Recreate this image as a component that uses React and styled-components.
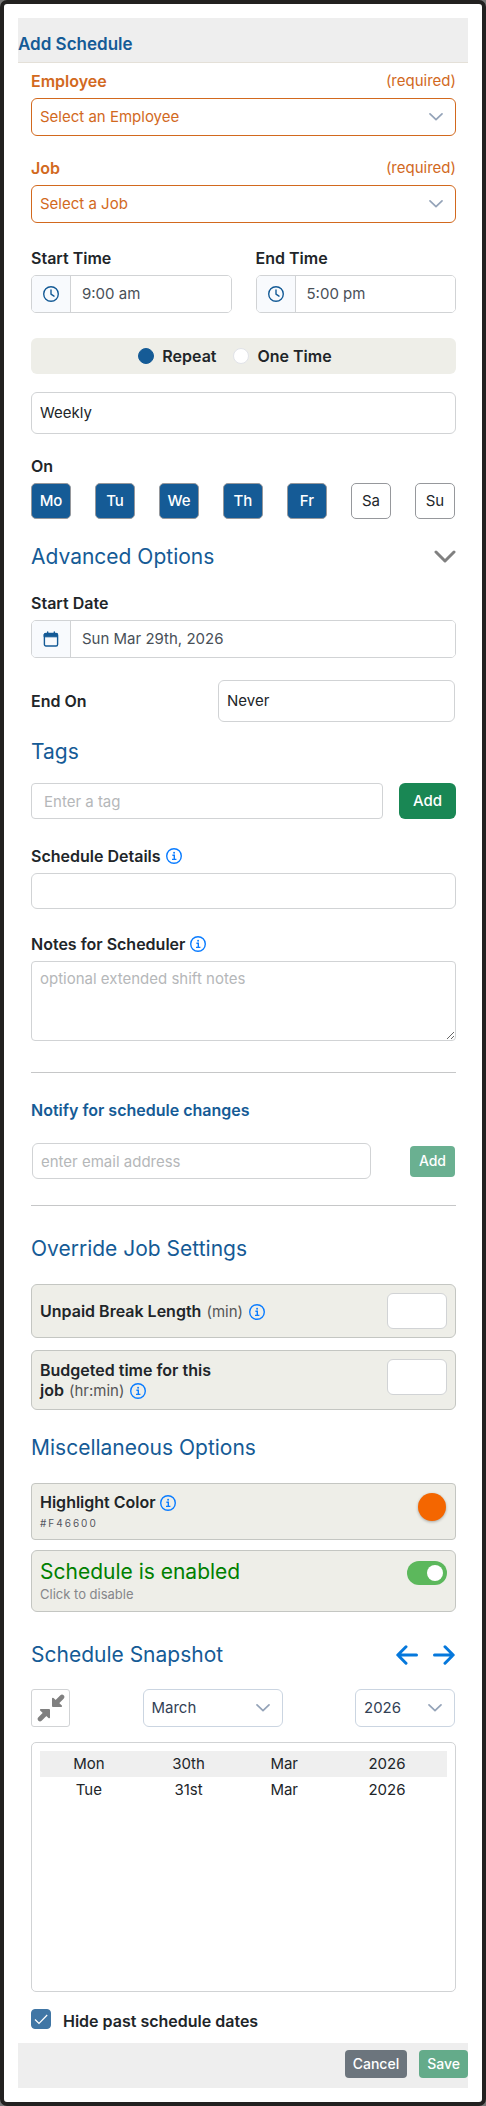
import React, { useId } from "react";
import styled, { createGlobalStyle, css } from "styled-components";

const c = {
  blue: "#155b96",
  link: "#0a7cff",
  orange: "#d2691e",
  text: "#212529",
  muted: "#495057",
  line: "#d1d3d5",
  panel: "#eeeee8",
};

const GlobalStyle = createGlobalStyle`
  *, *::before, *::after { box-sizing: border-box; }
  body { margin: 0; background: #777; color: ${c.text}; font: 400 15px/24px Inter, sans-serif; }
  h1, h2, h3, p { margin: 0; }
  button, input, select, textarea { font: inherit; color: inherit; margin: 0; }
  button { cursor: pointer; padding: 0; }
`;

const strong = css`
  font-size: 16px;
  font-weight: 600;
`;

const Dialog = styled.form`
  padding: 14px;
  background: #fff;
  border: 4px solid #222120;
  border-radius: 7px;
`;
const Header = styled.header`
  height: 45px;
  padding-top: 14px;
  background: #eee;
  border-bottom: 1px solid #e4e0d8;
`;
const Title = styled.h1`
  font-size: 17px;
  line-height: 24px;
  font-weight: 600;
  color: ${c.blue};
`;
const Body = styled.div`
  padding: 6px 12px 14px 13px;
`;
const Block = styled.div`
  margin-top: ${(p) => p.$top || 0}px;
`;
const Row = styled(Block)`
  display: flex;
  align-items: center;
  justify-content: space-between;
`;
const TagRow = styled(Row)`
  gap: 16px;
`;
const EmailRow = styled(Row)`
  gap: 39px;
  padding: 0 1px;
`;
const PickerRow = styled(Row)`
  padding-right: 1px;
`;
const LabelRow = styled.div`
  display: flex;
  justify-content: space-between;
  align-items: center;
  margin-bottom: 5px;
  color: ${(p) => (p.$required ? c.orange : "inherit")};
`;
const Label = styled.label`
  ${strong}
  display: flex;
  align-items: center;
  gap: 5px;
`;
const Legend = styled.div`
  ${strong}
  margin-bottom: 5px;
`;
const Section = styled.h2`
  font-size: 21px;
  line-height: 28px;
  font-weight: 400;
  color: ${c.blue};
`;
const Notify = styled.h3`
  ${strong}
  line-height: 24px;
  color: ${c.blue};
`;
const Rule = styled.hr`
  margin: ${(p) => p.$top}px 0 0;
  border: 0;
  height: 1px;
  background: #c6c7c8;
`;
const field = css`
  display: block;
  width: 100%;
  height: ${(p) => p.$height || 36}px;
  padding: 0 ${(p) => p.$pad || 8}px;
  background: #fff;
  border: 1px solid ${c.line};
  border-radius: ${(p) => p.$radius || 6}px;
  &::placeholder { color: #b5b7b9; opacity: 1; }
`;
const TextInput = styled.input`${field}`;
const SmallInput = styled.input`
  ${field}
  width: 60px;
  flex: none;
`;
const Notes = styled.textarea`
  ${field}
  padding-top: 5px;
  resize: vertical;
`;
const PlainSelect = styled.select`
  ${field}
  appearance: none;
`;
const EndSelect = styled.div`
  width: 56%;
  padding-right: 1px;
`;
const SelectBox = styled.div`
  position: relative;
  width: ${(p) => p.$width || "100%"};
  color: ${(p) => (p.$required ? c.orange : "#334155")};
  select {
    display: block;
    width: 100%;
    height: 38px;
    padding: 0 36px 0 8px;
    appearance: none;
    background: #fff;
    border: 1px solid ${(p) => (p.$required ? c.orange : "#cbd5e1")};
    border-radius: 6px;
  }
  svg { position: absolute; right: 13px; top: 12px; pointer-events: none; }
`;
const Columns = styled(Block)`
  display: grid;
  grid-template-columns: repeat(2, minmax(0, 1fr));
  gap: 24px;
`;
const Group = styled.div`
  display: flex;
  height: 38px;
  border: 1px solid ${c.line};
  border-radius: 5px;
  overflow: hidden;
  color: ${c.muted};
  input { flex: 1; min-width: 0; border: 0; padding: 0 11px; background: #fff; }
`;
const Addon = styled.span`
  display: grid;
  place-items: center;
  flex: none;
  width: 39px;
  background: #f8fafd;
  border-right: 1px solid ${c.line};
  color: ${c.blue};
`;
const RadioBar = styled(Block)`
  display: flex;
  align-items: center;
  justify-content: center;
  gap: 17px;
  height: 36px;
  padding-right: 17px;
  border-radius: 6px;
  background: ${c.panel};
  label { ${strong} display: flex; align-items: center; gap: 8px; }
  input {
    appearance: none;
    width: 16px;
    height: 16px;
    border: 1px solid #e1e3e8;
    border-radius: 50%;
    background: #fff;
  }
  input:checked { background: ${c.blue}; border-color: ${c.blue}; }
`;
const Days = styled.div`
  display: flex;
  justify-content: space-between;
  padding-right: 1px;
`;
const Day = styled.button`
  width: 40px;
  height: 36px;
  border: 1px solid #96989c;
  border-radius: 5px;
  background: ${(p) => (p.$on ? c.blue : "#fff")};
  color: ${(p) => (p.$on ? "#fff" : c.text)};
  font-weight: ${(p) => (p.$on ? 500 : 400)};
`;
const IconButton = styled.button`
  display: grid;
  place-items: center;
  border: 0;
  background: none;
  color: ${(p) => p.$color};
`;
const CompressButton = styled(IconButton)`
  width: 39px;
  height: 38px;
  border: 1px solid ${c.line};
  border-radius: 3px;
`;
const Button = styled.button`
  flex: none;
  height: ${(p) => p.$height}px;
  padding: 0 ${(p) => p.$pad || 8}px;
  border: 0;
  border-radius: ${(p) => p.$radius || 4}px;
  background: ${(p) => p.$bg};
  color: #fff;
  font-size: ${(p) => p.$size || 14}px;
  font-weight: 500;
`;
const Card = styled(Block)`
  display: flex;
  justify-content: space-between;
  align-items: ${(p) => p.$align || "flex-start"};
  padding: 8px;
  min-height: ${(p) => p.$min}px;
  border: 1px solid #c4c6c2;
  border-radius: ${(p) => p.$radius || 6}px;
  background: ${c.panel};
`;
const CardLabel = styled.label`
  ${strong}
  display: block;
  line-height: 20px;
  padding-top: ${(p) => p.$top || 0}px;
  span { font-size: 15px; font-weight: 400; color: #555; margin: 0 2px 0 1px; }
  svg { vertical-align: -3px; }
`;
const Hex = styled.div`
  font-size: 10px;
  line-height: 16px;
  letter-spacing: 2px;
  color: #55565f;
  margin-top: 3px;
`;
const Swatch = styled.button`
  width: 28px;
  height: 28px;
  margin: 1px;
  border: 0;
  border-radius: 50%;
  background: #f46600;
  box-shadow: 0 1px 3px rgba(0, 0, 0, 0.3);
`;
const Enabled = styled.label`
  display: block;
  font-size: 21px;
  line-height: 26px;
  color: #008000;
`;
const Hint = styled.p`
  font-size: 13px;
  line-height: 18px;
  color: #85868a;
`;
const Toggle = styled.input`
  appearance: none;
  display: flex;
  align-items: center;
  justify-content: flex-end;
  width: 40px;
  height: 24px;
  margin: 2px 0 0;
  padding: 4px;
  border-radius: 12px;
  background: #5cb85c;
  &::before { content: ""; width: 16px; height: 16px; border-radius: 50%; background: #fff; }
  &:not(:checked) { background: #bbb; justify-content: flex-start; }
`;
const Arrows = styled.div`
  display: flex;
  gap: 15px;
  padding-right: 1px;
`;
const List = styled(Block)`
  min-height: 250px;
  padding: 8px;
  border: 1px solid ${c.line};
  border-radius: 5px;
`;
const Dates = styled.table`
  width: 100%;
  table-layout: fixed;
  border-collapse: collapse;
  text-align: center;
  td { height: 26px; padding: 0; }
  td:nth-child(1) { width: 24%; }
  td:nth-child(2) { width: 25%; }
  td:nth-child(3) { width: 22%; }
  td:nth-child(4) { padding-right: 2px; }
  tr:nth-child(odd) { background: #efefef; }
`;
const Check = styled(Block)`
  display: flex;
  gap: 12px;
  height: 20px;
  label { ${strong} }
`;
const CheckBox = styled.span`
  position: relative;
  width: 20px;
  height: 20px;
  input {
    appearance: none;
    display: block;
    width: 20px;
    height: 20px;
    border-radius: 4px;
    border: 1px solid ${c.line};
  }
  input:checked { background: #4076a5; border-color: #4076a5; }
  svg { position: absolute; inset: 0; pointer-events: none; }
`;
const Footer = styled.footer`
  display: flex;
  justify-content: flex-end;
  gap: 12px;
  height: 45px;
  padding-top: 7px;
  background: #eee;
`;

const Svg = ({ w = 16, h = w, sw = 1.5, children }) => (
  <svg width={w} height={h} viewBox={`0 0 ${w} ${h}`} fill="none" stroke="currentColor"
    strokeWidth={sw} strokeLinecap="round" strokeLinejoin="round" aria-hidden="true">
    {children}
  </svg>
);
const InfoIcon = () => (
  <svg width="16" height="16" viewBox="0 0 16 16" fill="none" stroke={c.link} aria-label="Info">
    <circle cx="8" cy="8" r="7.3" strokeWidth="1.4" />
    <path d="M6.4 7.2H8.3V11.2M6 11.4H10.4" strokeWidth="1.4" />
    <circle cx="8.1" cy="4.7" r="0.95" fill={c.link} stroke="none" />
  </svg>
);
const ClockIcon = () => (
  <Svg sw={1.4}><circle cx="8" cy="8" r="7.3" /><path d="M8 4V8.2L11 10.2" /></Svg>
);
const CalendarIcon = () => (
  <Svg sw={1.4}>
    <rect x="1.4" y="2.4" width="13.2" height="12.6" rx="1.5" />
    <path d="M1.5 3H14.5V5.8H1.5Z" fill="currentColor" strokeWidth="1" />
    <path d="M4.7 1V3M11.3 1V3" />
  </Svg>
);
const Chevron = () => (
  <svg width="14" height="14" viewBox="0 0 14 14" fill="none" stroke="#94a3b8" strokeWidth="1.7" strokeLinecap="round" strokeLinejoin="round" aria-hidden="true">
    <path d="M1 3.9L7 9.7L13 3.9" />
  </svg>
);

function DropDown({ required, width, label, id, value }) {
  return (
    <SelectBox $required={required} $width={width}>
      <select id={id} aria-label={label} defaultValue={value}><option>{value}</option></select>
      <Chevron />
    </SelectBox>
  );
}
function RequiredField({ label, value, top }) {
  const id = useId();
  return (
    <Block $top={top}>
      <LabelRow $required><Label htmlFor={id}>{label}</Label><span>(required)</span></LabelRow>
      <DropDown required id={id} value={value} />
    </Block>
  );
}
function AddonField({ label, value, icon, top }) {
  const id = useId();
  return (
    <Block $top={top}>
      <LabelRow><Label htmlFor={id}>{label}</Label></LabelRow>
      <Group><Addon>{icon}</Addon><input id={id} defaultValue={value} /></Group>
    </Block>
  );
}

const days = [["Mo", true], ["Tu", true], ["We", true], ["Th", true], ["Fr", true], ["Sa", false], ["Su", false]];
const dates = [["Mon", "30th", "Mar", "2026"], ["Tue", "31st", "Mar", "2026"]];

export default function App() {
  return (
    <>
      <GlobalStyle />
      <Dialog onSubmit={(e) => e.preventDefault()}>
        <Header><Title>Add Schedule</Title></Header>
        <Body>
          <RequiredField label="Employee" value="Select an Employee" />
          <RequiredField label="Job" value="Select a Job" top={20} />
          <Columns $top={23}>
            <AddonField label="Start Time" value="9:00 am" icon={<ClockIcon />} />
            <AddonField label="End Time" value="5:00 pm" icon={<ClockIcon />} />
          </Columns>
          <RadioBar $top={25}>
            <label><input type="radio" name="kind" defaultChecked />Repeat</label>
            <label><input type="radio" name="kind" />One Time</label>
          </RadioBar>
          <Block $top={18}>
            <PlainSelect $height={42} aria-label="Frequency"><option>Weekly</option></PlainSelect>
          </Block>
          <Block $top={20}>
            <Legend>On</Legend>
            <Days>
              {days.map(([name, on]) => <Day key={name} type="button" $on={on} aria-pressed={on}>{name}</Day>)}
            </Days>
          </Block>
          <Row $top={24}>
            <Section>Advanced Options</Section>
            <IconButton type="button" $color="#808080" aria-label="Toggle advanced options">
              <Svg w={22} h={14} sw={3}><path d="M2 2L11 11L20 2" /></Svg>
            </IconButton>
          </Row>
          <AddonField label="Start Date" value="Sun Mar 29th, 2026" icon={<CalendarIcon />} top={20} />
          <Row $top={22}>
            <Label htmlFor="end-on">End On</Label>
            <EndSelect><PlainSelect id="end-on" $height={42}><option>Never</option></PlainSelect></EndSelect>
          </Row>
          <Block $top={16}><Section>Tags</Section></Block>
          <TagRow $top={17}>
            <TextInput $pad={12} $radius={4} placeholder="Enter a tag" aria-label="Tag" />
            <Button type="button" $height={36} $pad={14} $radius={6} $size={15} $bg="#198754">Add</Button>
          </TagRow>
          <Block $top={25}>
            <LabelRow><Label htmlFor="details">Schedule Details <InfoIcon /></Label></LabelRow>
            <TextInput id="details" />
          </Block>
          <Block $top={23}>
            <LabelRow><Label htmlFor="notes">Notes for Scheduler <InfoIcon /></Label></LabelRow>
            <Notes id="notes" $height={80} $radius={4} placeholder="optional extended shift notes" />
          </Block>
          <Rule $top={31} />
          <Block $top={25}><Notify>Notify for schedule changes</Notify></Block>
          <EmailRow $top={21}>
            <TextInput type="email" placeholder="enter email address" aria-label="Email address" />
            <Button type="button" $height={31} $pad={9} $bg="#6ab091">Add</Button>
          </EmailRow>
          <Rule $top={26} />
          <Block $top={29}><Section>Override Job Settings</Section></Block>
          <Card $top={21} $align="center">
            <CardLabel htmlFor="break">Unpaid Break Length <span>(min)</span> <InfoIcon /></CardLabel>
            <SmallInput id="break" />
          </Card>
          <Card $top={12} $min={60}>
            <CardLabel $top={1} htmlFor="budget">Budgeted time for this<br />job <span>(hr:min)</span> <InfoIcon /></CardLabel>
            <SmallInput id="budget" />
          </Card>
          <Block $top={24}><Section>Miscellaneous Options</Section></Block>
          <Card $top={21} $min={57} $radius={4}>
            <div>
              <CardLabel htmlFor="color">Highlight Color <InfoIcon /></CardLabel>
              <Hex>#F46600</Hex>
            </div>
            <Swatch id="color" type="button" />
          </Card>
          <Card $top={10} $min={62}>
            <div>
              <Enabled htmlFor="enabled">Schedule is enabled</Enabled>
              <Hint>Click to disable</Hint>
            </div>
            <Toggle id="enabled" type="checkbox" role="switch" defaultChecked />
          </Card>
          <Row $top={29}>
            <Section>Schedule Snapshot</Section>
            <Arrows>
              <IconButton type="button" $color="#0578dc" aria-label="Previous month">
                <Svg w={22} h={20} sw={3}><path d="M20.5 10H2M10 1.8L1.8 10L10 18.2" /></Svg>
              </IconButton>
              <IconButton type="button" $color="#0578dc" aria-label="Next month">
                <Svg w={22} h={20} sw={3}><path d="M1.5 10H20M12 1.8L20.2 10L12 18.2" /></Svg>
              </IconButton>
            </Arrows>
          </Row>
          <PickerRow $top={20}>
            <CompressButton type="button" $color="#808080" aria-label="Collapse">
              <svg width="28" height="28" viewBox="0 0 28 28" fill="currentColor" stroke="currentColor" strokeLinejoin="round" strokeLinecap="round" aria-hidden="true">
                <path d="M15.9 4.6V12.1H24.2L20.8 8.9L19 7.4Z" strokeWidth="1.8" />
                <path d="M19 9L25 3" strokeWidth="4.6" />
                <path d="M12.1 23.4V15.9H3.8L7.2 19.1L9 20.6Z" strokeWidth="1.8" />
                <path d="M9 19L3 25" strokeWidth="4.6" />
              </svg>
            </CompressButton>
            <DropDown width="140px" label="Month" value="March" />
            <DropDown width="100px" label="Year" value="2026" />
          </PickerRow>
          <List $top={15}>
            <Dates>
              <tbody>
                {dates.map((row) => <tr key={row[1]}>{row.map((v) => <td key={v}>{v}</td>)}</tr>)}
              </tbody>
            </Dates>
          </List>
          <Check $top={17}>
            <CheckBox>
              <input id="hide" type="checkbox" defaultChecked />
              <svg width="20" height="20" viewBox="0 0 20 20" fill="none" stroke="#fff" strokeWidth="1.2" aria-hidden="true">
                <path d="M4 10.5L8 14.5L16.2 6" />
              </svg>
            </CheckBox>
            <label htmlFor="hide">Hide past schedule dates</label>
          </Check>
        </Body>
        <Footer>
          <Button type="button" $height={28} $bg="#6c757d">Cancel</Button>
          <Button type="submit" $height={28} $bg="#64ab8a">Save</Button>
        </Footer>
      </Dialog>
    </>
  );
}
